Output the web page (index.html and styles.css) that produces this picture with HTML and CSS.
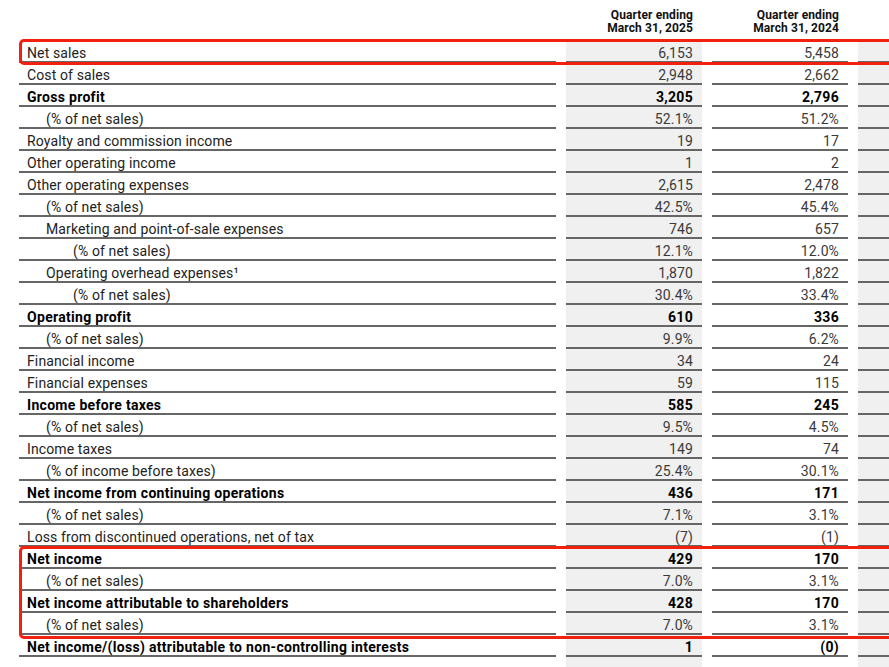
FILE: index.html
```html
<!DOCTYPE html>
<html>
<head>
<meta charset="utf-8">
<link rel="stylesheet" href="styles.css">
</head>
<body>
<div class="sheet">
  <div class="grid">
    <div class="hcell"></div>
    <div class="hcell num-h">Quarter ending<br>March 31, 2025</div>
    <div class="hcell num-h">Quarter ending<br>March 31, 2024</div>
    <div class="hcell"></div>

    <div class="c lab">Net sales</div><div class="c v s">6,153</div><div class="c v">5,458</div><div class="c s"></div>
    <div class="c lab">Cost of sales</div><div class="c v s">2,948</div><div class="c v">2,662</div><div class="c s"></div>
    <div class="c lab b">Gross profit</div><div class="c v s b">3,205</div><div class="c v b">2,796</div><div class="c s"></div>
    <div class="c lab i1">(% of net sales)</div><div class="c v s">52.1%</div><div class="c v">51.2%</div><div class="c s"></div>
    <div class="c lab">Royalty and commission income</div><div class="c v s">19</div><div class="c v">17</div><div class="c s"></div>
    <div class="c lab">Other operating income</div><div class="c v s">1</div><div class="c v">2</div><div class="c s"></div>
    <div class="c lab">Other operating expenses</div><div class="c v s">2,615</div><div class="c v">2,478</div><div class="c s"></div>
    <div class="c lab i1">(% of net sales)</div><div class="c v s">42.5%</div><div class="c v">45.4%</div><div class="c s"></div>
    <div class="c lab i1">Marketing and point-of-sale expenses</div><div class="c v s">746</div><div class="c v">657</div><div class="c s"></div>
    <div class="c lab i2">(% of net sales)</div><div class="c v s">12.1%</div><div class="c v">12.0%</div><div class="c s"></div>
    <div class="c lab i1">Operating overhead expenses¹</div><div class="c v s">1,870</div><div class="c v">1,822</div><div class="c s"></div>
    <div class="c lab i2">(% of net sales)</div><div class="c v s">30.4%</div><div class="c v">33.4%</div><div class="c s"></div>
    <div class="c lab b">Operating profit</div><div class="c v s b">610</div><div class="c v b">336</div><div class="c s"></div>
    <div class="c lab i1">(% of net sales)</div><div class="c v s">9.9%</div><div class="c v">6.2%</div><div class="c s"></div>
    <div class="c lab">Financial income</div><div class="c v s">34</div><div class="c v">24</div><div class="c s"></div>
    <div class="c lab">Financial expenses</div><div class="c v s">59</div><div class="c v">115</div><div class="c s"></div>
    <div class="c lab b">Income before taxes</div><div class="c v s b">585</div><div class="c v b">245</div><div class="c s"></div>
    <div class="c lab i1">(% of net sales)</div><div class="c v s">9.5%</div><div class="c v">4.5%</div><div class="c s"></div>
    <div class="c lab">Income taxes</div><div class="c v s">149</div><div class="c v">74</div><div class="c s"></div>
    <div class="c lab i1">(% of income before taxes)</div><div class="c v s">25.4%</div><div class="c v">30.1%</div><div class="c s"></div>
    <div class="c lab b">Net income from continuing operations</div><div class="c v s b">436</div><div class="c v b">171</div><div class="c s"></div>
    <div class="c lab i1">(% of net sales)</div><div class="c v s">7.1%</div><div class="c v">3.1%</div><div class="c s"></div>
    <div class="c lab">Loss from discontinued operations, net of tax</div><div class="c v s">(7)</div><div class="c v">(1)</div><div class="c s"></div>
    <div class="c lab b">Net income</div><div class="c v s b">429</div><div class="c v b">170</div><div class="c s"></div>
    <div class="c lab i1">(% of net sales)</div><div class="c v s">7.0%</div><div class="c v">3.1%</div><div class="c s"></div>
    <div class="c lab b">Net income attributable to shareholders</div><div class="c v s b">428</div><div class="c v b">170</div><div class="c s"></div>
    <div class="c lab i1">(% of net sales)</div><div class="c v s">7.0%</div><div class="c v">3.1%</div><div class="c s"></div>
    <div class="c lab b">Net income/(loss) attributable to non-controlling interests</div><div class="c v s b">1</div><div class="c v b">(0)</div><div class="c s"></div>
    <div class="c lab nol"></div><div class="c v s nol"></div><div class="c v nol"></div><div class="c s nol"></div>
  </div>
  <div class="mark mark-sales"></div>
  <div class="mark mark-income"></div>
</div>
</body>
</html>
```

FILE: styles.css
```css
html, body {
  margin: 0;
  padding: 0;
  background: #fff;
  overflow: hidden;
}
body {
  font-family: Roboto, "Liberation Sans", sans-serif;
  color: #222;
}
.sheet {
  position: relative;
  width: 870px;
  margin-left: 19px;
  overflow: hidden;
}
.grid {
  display: grid;
  grid-template-columns: 537px 136px 136px 1fr;
  column-gap: 10px;
}
.hcell {
  height: 41px;
  box-sizing: border-box;
}
.num-h {
  font-weight: 700;
  font-size: 12px;
  line-height: 13px;
  color: #111;
  text-align: right;
  padding: 9px 9px 0 0;
  letter-spacing: 0.1px;
}
.c {
  height: 22px;
  box-sizing: border-box;
  border-bottom: 2px solid #666;
  padding-top: 4px;
  font-size: 14px;
  line-height: 16px;
  white-space: nowrap;
  letter-spacing: 0.12px;
}
.lab {
  padding-left: 8px;
  color: #222;
}
.i1 { padding-left: 27px; }
.i2 { padding-left: 54px; }
.v {
  text-align: right;
  padding-right: 9px;
  color: #3a3a3a;
}
.s { background: #f0f0f0; }
.b { font-weight: 700; color: #000; letter-spacing: 0.3px; }
.nol { border-bottom: none; }
.mark {
  position: absolute;
  left: 0;
  right: -10px;
  border: 3px solid #f2200f;
  border-radius: 5px;
  box-sizing: border-box;
}
.mark-sales {
  top: 39px;
  height: 26px;
}
.mark-income {
  top: 546px;
  height: 93px;
}
```
